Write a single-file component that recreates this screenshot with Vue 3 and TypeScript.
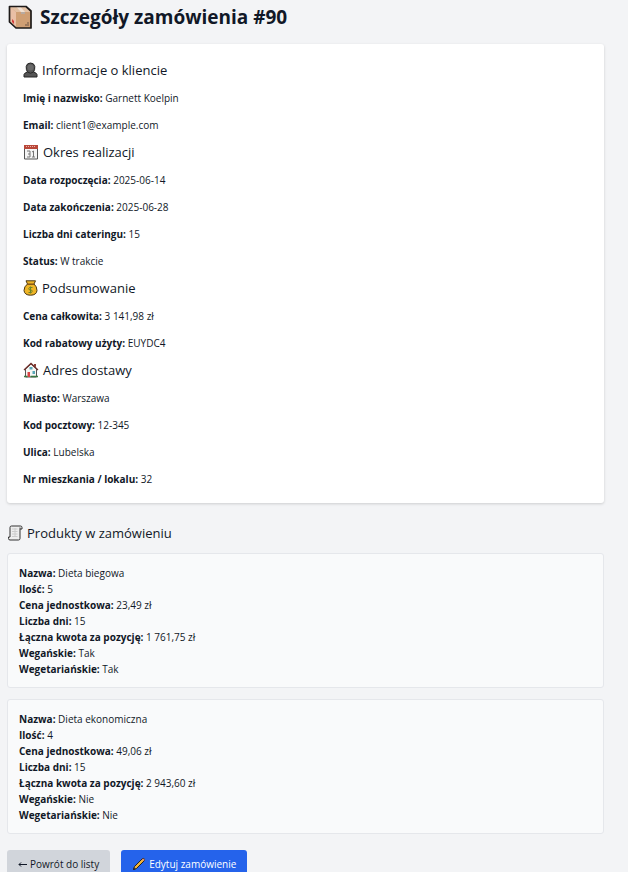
<script setup lang="ts">
interface Field {
  label: string
  value: string
}

interface Section {
  title: string
  icon: 'person' | 'calendar' | 'money' | 'house'
  fields: Field[]
}

const sections: Section[] = [
  {
    title: 'Informacje o kliencie',
    icon: 'person',
    fields: [
      { label: 'Imię i nazwisko', value: 'Garnett Koelpin' },
      { label: 'Email', value: 'client1@example.com' },
    ],
  },
  {
    title: 'Okres realizacji',
    icon: 'calendar',
    fields: [
      { label: 'Data rozpoczęcia', value: '2025-06-14' },
      { label: 'Data zakończenia', value: '2025-06-28' },
      { label: 'Liczba dni cateringu', value: '15' },
      { label: 'Status', value: 'W trakcie' },
    ],
  },
  {
    title: 'Podsumowanie',
    icon: 'money',
    fields: [
      { label: 'Cena całkowita', value: '3 141,98 zł' },
      { label: 'Kod rabatowy użyty', value: 'EUYDC4' },
    ],
  },
  {
    title: 'Adres dostawy',
    icon: 'house',
    fields: [
      { label: 'Miasto', value: 'Warszawa' },
      { label: 'Kod pocztowy', value: '12-345' },
      { label: 'Ulica', value: 'Lubelska' },
      { label: 'Nr mieszkania / lokalu', value: '32' },
    ],
  },
]

const products: Field[][] = [
  [
    { label: 'Nazwa', value: 'Dieta biegowa' },
    { label: 'Ilość', value: '5' },
    { label: 'Cena jednostkowa', value: '23,49 zł' },
    { label: 'Liczba dni', value: '15' },
    { label: 'Łączna kwota za pozycję', value: '1 761,75 zł' },
    { label: 'Wegańskie', value: 'Tak' },
    { label: 'Wegetariańskie', value: 'Tak' },
  ],
  [
    { label: 'Nazwa', value: 'Dieta ekonomiczna' },
    { label: 'Ilość', value: '4' },
    { label: 'Cena jednostkowa', value: '49,06 zł' },
    { label: 'Liczba dni', value: '15' },
    { label: 'Łączna kwota za pozycję', value: '2 943,60 zł' },
    { label: 'Wegańskie', value: 'Nie' },
    { label: 'Wegetariańskie', value: 'Nie' },
  ],
]
</script>

<template>
  <main class="page">
    <h1 class="title">
      <svg class="title-icon" viewBox="0 0 24 24" aria-hidden="true">
        <path d="M1.500 1.500H18l5 4.500v17H8l-6.500-6z" fill="#cf9f74" />
        <path d="M1.500 1.500L8 7v16l-6.500-6z" fill="#e9bfa5" />
        <path d="M1.500 1.500H18L23 7H8z" fill="#e3c1a4" />
        <path d="M8 1.500h4L17 7h-4z" fill="#f1e0d0" />
        <path d="M13 7h4v2h-4z" fill="#b8aaa0" />
        <path d="M4 14l2 2v3l-2-2z" fill="#d43c3c" />
        <path d="M17 20h4M19 18h2" stroke="#6d5444" />
        <path d="M1.500 1.500H18l5 4.500v17H8l-6.500-6z" fill="none" stroke="#1d1a19" stroke-width="1.700" stroke-linejoin="round" />
      </svg>
      Szczegóły zamówienia #90
    </h1>

    <div class="details">
      <section v-for="section in sections" :key="section.title" class="section">
        <h2 class="heading">
          <svg v-if="section.icon === 'person'" class="icon narrow" viewBox="0 0 15 16" aria-hidden="true">
            <path d="M1 15v-2.500Q1.500 10.800 4.500 10Q3 8 3.200 4.500Q3.800 1 7.500 1t4.300 3.500Q12 8 10.500 10Q13.500 10.800 14 12.500V15z" fill="#555" stroke="#242424" stroke-linejoin="round" />
            <path d="M4.500 10q3 2.500 6 0" fill="none" stroke="#292929" />
            <circle cx="7.500" cy="5.500" r="3" fill="#6a6a6a" />
          </svg>
          <svg v-else-if="section.icon === 'calendar'" class="icon" viewBox="0 0 16 16" aria-hidden="true">
            <path d="M1.500 1.500h13v13.500h-13z" fill="#f5f5f5" stroke="#555" />
            <path d="M1 1h14v4H1z" fill="#b94739" />
            <path d="M3 2.500h10" stroke="#edb2a9" stroke-dasharray="1 1" />
            <path d="M4 7h3v6H4M5 10h2M9 8l1.500-1v6M9 13h3" fill="none" stroke="#777" />
          </svg>
          <svg v-else-if="section.icon === 'money'" class="icon narrow" viewBox="0 0 15 16" aria-hidden="true">
            <path d="M3 .8h9.500L11 4Q14 6.500 14 10.500Q13.500 15.200 7.500 15.200T1 10.500Q1 6.500 4.500 4z" fill="#efb526" stroke="#4b3814" stroke-linejoin="round" />
            <path d="M4 4.200h7" stroke="#835716" stroke-width="1.500" />
            <path d="M9.500 7.500h-3Q5 8.500 6.500 10h2q1.500 1 0 2.500h-3M7.500 6.500v7" fill="none" stroke="#6b852b" />
          </svg>
          <svg v-else class="icon" viewBox="0 0 16 16" aria-hidden="true">
            <path d="M2.500 7L8 2l5.500 5v8h-11z" fill="#f6f7f4" stroke="#555" />
            <path d="M11 2h2v3.500l-2-2z" fill="#8d4037" />
            <path d="M1 8l7-6.500L15 8" fill="none" stroke="#6f302c" stroke-width="1.300" />
            <path d="M6.500 5h3v2.500h-3zM9.500 9h2.500v3H9.500z" fill="#58a6b7" />
            <path d="M4.500 10h2.500v5H4.500z" fill="#d94343" />
            <path d="M1 14.500h3.500m3 0H15" stroke="#397942" stroke-width="1.500" />
          </svg>
          {{ section.title }}
        </h2>
        <p v-for="field in section.fields" :key="field.label" class="line">
          <strong>{{ field.label }}:</strong> {{ field.value }}
        </p>
      </section>
    </div>

    <section class="products">
      <h2 class="heading products-heading">
        <svg class="icon" viewBox="0 0 16 16" aria-hidden="true">
          <path d="M4.500 1h9q1.500 0 1.500 1.500V4h-2v9.500q0 1.500-1.500 1.500H3Q1.500 15 1.500 13.500V12H3V2.500Q3 1 4.500 1z" fill="#eee" stroke="#333" stroke-linejoin="round" />
          <path d="M13 4V2.500" fill="none" stroke="#444" />
          <path d="M5 4h5.500M5 6.500h5.500M5 9h5.500M5 11.500h5.500M8 3v9" stroke="#ccc" />
        </svg>
        Produkty w zamówieniu
      </h2>
      <ul class="product-list">
        <li v-for="product in products" :key="product[0].value" class="product">
          <p v-for="field in product" :key="field.label" class="line">
            <strong>{{ field.label }}:</strong> {{ field.value }}
          </p>
        </li>
      </ul>
    </section>

    <nav class="actions">
      <a href="#lista" class="button back">
        <svg class="arrow" viewBox="0 0 9 8" aria-hidden="true">
          <path d="M9 4.500H1M3 2.500l-2 2 2 2" fill="none" stroke="currentColor" />
        </svg>
        Powrót do listy
      </a>
      <a href="#edycja" class="button edit">
        <svg class="pencil" viewBox="0 0 14 14" aria-hidden="true">
          <path d="M1.500 12.500l1-3L10 2q1.500-1 2.200-.2T12 4l-7.500 7.500z" fill="#efb33b" stroke="#222" stroke-linejoin="round" />
          <path d="M9.800 2.500l1.700 1.700.9-1q.3-1-.3-1.300t-1.300-.2z" fill="#db8c78" />
          <path d="M1 13l.7-2.500 1.800 1.800z" fill="#222" />
        </svg>
        Edytuj zamówienie
      </a>
    </nav>
  </main>
</template>

<style>
body {
  background: #f3f4f6;
}
</style>

<style scoped>
.page {
  padding: 3px 24px 16px 7px;
  font-family: 'Segoe UI', 'Open Sans', 'Noto Sans', sans-serif;
  font-size: 10px;
  line-height: 16px;
  color: #111827;
}

h1,
h2,
p,
ul {
  margin: 0;
  padding: 0;
}

.title {
  display: flex;
  align-items: center;
  gap: 8px;
  margin-bottom: 13px;
  padding-left: 1px;
  font-size: 19px;
  line-height: 28px;
  font-weight: 700;
}

.title-icon {
  width: 24px;
  height: 24px;
}

.details {
  display: flex;
  flex-direction: column;
  gap: 9px;
  padding: 16px;
  background: #fff;
  border-radius: 3px;
  box-shadow: 0 1px 3px rgb(0 0 0 / 16%);
}

.section {
  display: flex;
  flex-direction: column;
}

.section .line + .line {
  margin-top: 11px;
}

.heading {
  display: flex;
  align-items: center;
  gap: 4px;
  font-size: 13px;
  line-height: 20px;
  font-weight: 500;
}

.section .heading {
  margin-bottom: 10px;
}

.icon {
  width: 16px;
  height: 16px;
}

.narrow {
  width: 15px;
}

.line strong {
  font-weight: 700;
}

.products-heading {
  margin: 20px 0 10px;
}

.product-list {
  display: flex;
  flex-direction: column;
  gap: 11px;
  list-style: none;
}

.product {
  padding: 11px 11px 10px;
  background: #f9fafb;
  border: 1px solid #e5e7eb;
  border-radius: 3px;
}

.actions {
  display: flex;
  gap: 11px;
  margin-top: 16px;
}

.button {
  display: flex;
  align-items: center;
  gap: 3px;
  padding: 6px 11px;
  border-radius: 3px;
  color: #111827;
  text-decoration: none;
}

.back {
  background: #d1d5db;
}

.edit {
  background: #2563eb;
  color: #fff;
}

.arrow {
  width: 9px;
  height: 8px;
}

.pencil {
  width: 14px;
  height: 14px;
}
</style>
